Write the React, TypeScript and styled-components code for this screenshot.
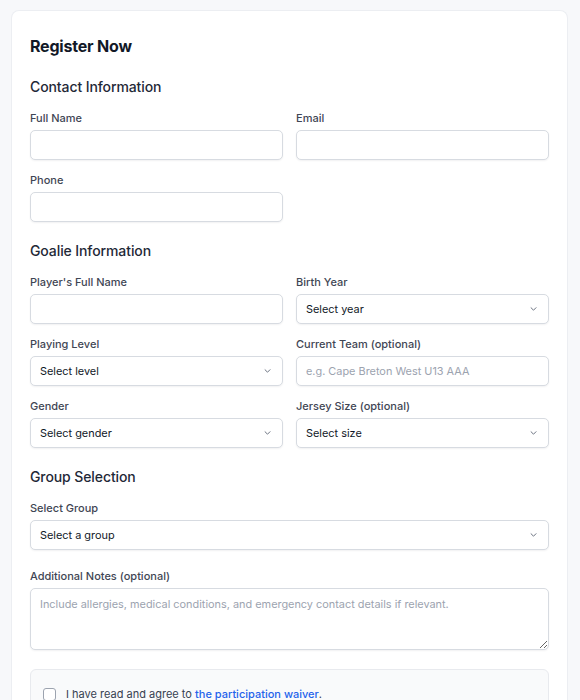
import React from 'react'
import styled, { createGlobalStyle } from 'styled-components'

const GlobalStyle = createGlobalStyle`
  * { box-sizing: border-box; }
  html, body { margin: 0; padding: 0; background: #f7f8fa; }
  body {
    font-family: Inter, "Noto Sans", "Liberation Sans", sans-serif;
    color: #111827;
    -webkit-font-smoothing: antialiased;
  }
`

const Page = styled.div`
  padding: 10px 12px 0 11px;
`

const Card = styled.div`
  background: #ffffff;
  border: 1px solid #eceef2;
  border-bottom: none;
  border-radius: 8px 8px 0 0;
  padding: 23px 18px 40px 18px;
`

const Title = styled.h1`
  margin: 0 0 18px;
  font-size: 16px;
  line-height: 24px;
  font-weight: 700;
  color: #111827;
  letter-spacing: -0.2px;
`

const Section = styled.section`
  margin-bottom: 18px;
`

const SectionTitle = styled.h2`
  margin: 0 0 12px;
  font-size: 14px;
  line-height: 22px;
  font-weight: 500;
  color: #1f2937;
  letter-spacing: -0.1px;
`

const Grid = styled.div`
  display: grid;
  grid-template-columns: 1fr 1fr;
  column-gap: 13px;
  row-gap: 12px;
`

const Stack = styled.div`
  display: flex;
  flex-direction: column;
  gap: 18px;
`

const Field = styled.div`
  display: flex;
  flex-direction: column;
  min-width: 0;
`

const Label = styled.label`
  font-size: 11px;
  line-height: 16px;
  font-weight: 500;
  color: #3f4654;
  margin-bottom: 4px;
`

const controlBase = `
  width: 100%;
  border: 1px solid #d7dbe1;
  border-radius: 5px;
  background: #ffffff;
  box-shadow: 0 1px 2px rgba(16, 24, 40, 0.06);
  font-family: inherit;
  font-size: 10.9px;
  color: #111827;
  padding: 0 9px;
  outline: none;
`

const Input = styled.input`
  ${controlBase}
  height: 30px;
  &::placeholder { color: #9ca3af; }
`

const SelectWrap = styled.div`
  position: relative;
`

const Select = styled.select`
  ${controlBase}
  height: 30px;
  appearance: none;
  -webkit-appearance: none;
  cursor: pointer;
`

const Chevron = styled.svg`
  position: absolute;
  right: 12px;
  top: 50%;
  transform: translateY(-50%);
  pointer-events: none;
`

const TextArea = styled.textarea`
  ${controlBase}
  display: block;
  height: 62px;
  padding: 8px 9px;
  resize: vertical;
  &::placeholder { color: #9ca3af; }
`

const WaiverBox = styled.div`
  background: #f9fafb;
  border: 1px solid #e8eaee;
  border-radius: 6px;
  padding: 16px 12px 16px 12px;
  display: flex;
  align-items: center;
  gap: 10px;
  margin-top: 1px;
`

const Checkbox = styled.input`
  appearance: none;
  -webkit-appearance: none;
  width: 13px;
  height: 13px;
  margin: 0;
  border: 1px solid #9ca3af;
  border-radius: 3px;
  background: #ffffff;
  flex-shrink: 0;
`

const WaiverText = styled.span`
  font-size: 11px;
  line-height: 16px;
  color: #374151;
`

const Link = styled.a`
  color: #2563eb;
  font-weight: 500;
  text-decoration: underline;
  text-underline-offset: 2px;
`

const DropSelect = ({ placeholder }: { placeholder: string }) => (
  <SelectWrap>
    <Select defaultValue="">
      <option value="" disabled>
        {placeholder}
      </option>
    </Select>
    <Chevron width="7" height="5" viewBox="0 0 7 5" fill="none">
      <path d="M1 1.2l2.5 2.5 2.5-2.5" stroke="#6b7280" strokeWidth="1" strokeLinecap="round" strokeLinejoin="round" />
    </Chevron>
  </SelectWrap>
)

const App = () => {
  return (
    <Page>
      <GlobalStyle />
      <Card>
        <Title>Register Now</Title>

        <Section>
          <SectionTitle>Contact Information</SectionTitle>
          <Grid>
            <Field>
              <Label>Full Name</Label>
              <Input type="text" />
            </Field>
            <Field>
              <Label>Email</Label>
              <Input type="email" />
            </Field>
            <Field>
              <Label>Phone</Label>
              <Input type="tel" />
            </Field>
          </Grid>
        </Section>

        <Section>
          <SectionTitle>Goalie Information</SectionTitle>
          <Grid>
            <Field>
              <Label>Player's Full Name</Label>
              <Input type="text" />
            </Field>
            <Field>
              <Label>Birth Year</Label>
              <DropSelect placeholder="Select year" />
            </Field>
            <Field>
              <Label>Playing Level</Label>
              <DropSelect placeholder="Select level" />
            </Field>
            <Field>
              <Label>Current Team (optional)</Label>
              <Input type="text" placeholder="e.g. Cape Breton West U13 AAA" />
            </Field>
            <Field>
              <Label>Gender</Label>
              <DropSelect placeholder="Select gender" />
            </Field>
            <Field>
              <Label>Jersey Size (optional)</Label>
              <DropSelect placeholder="Select size" />
            </Field>
          </Grid>
        </Section>

        <Section>
          <SectionTitle>Group Selection</SectionTitle>
          <Stack>
            <Field>
              <Label>Select Group</Label>
              <DropSelect placeholder="Select a group" />
            </Field>
            <Field>
              <Label>Additional Notes (optional)</Label>
              <TextArea placeholder="Include allergies, medical conditions, and emergency contact details if relevant." />
            </Field>
            <WaiverBox>
              <Checkbox type="checkbox" />
              <WaiverText>
                I have read and agree to <Link href="#">the participation waiver</Link>.
              </WaiverText>
            </WaiverBox>
          </Stack>
        </Section>
      </Card>
    </Page>
  )
}

export default App
